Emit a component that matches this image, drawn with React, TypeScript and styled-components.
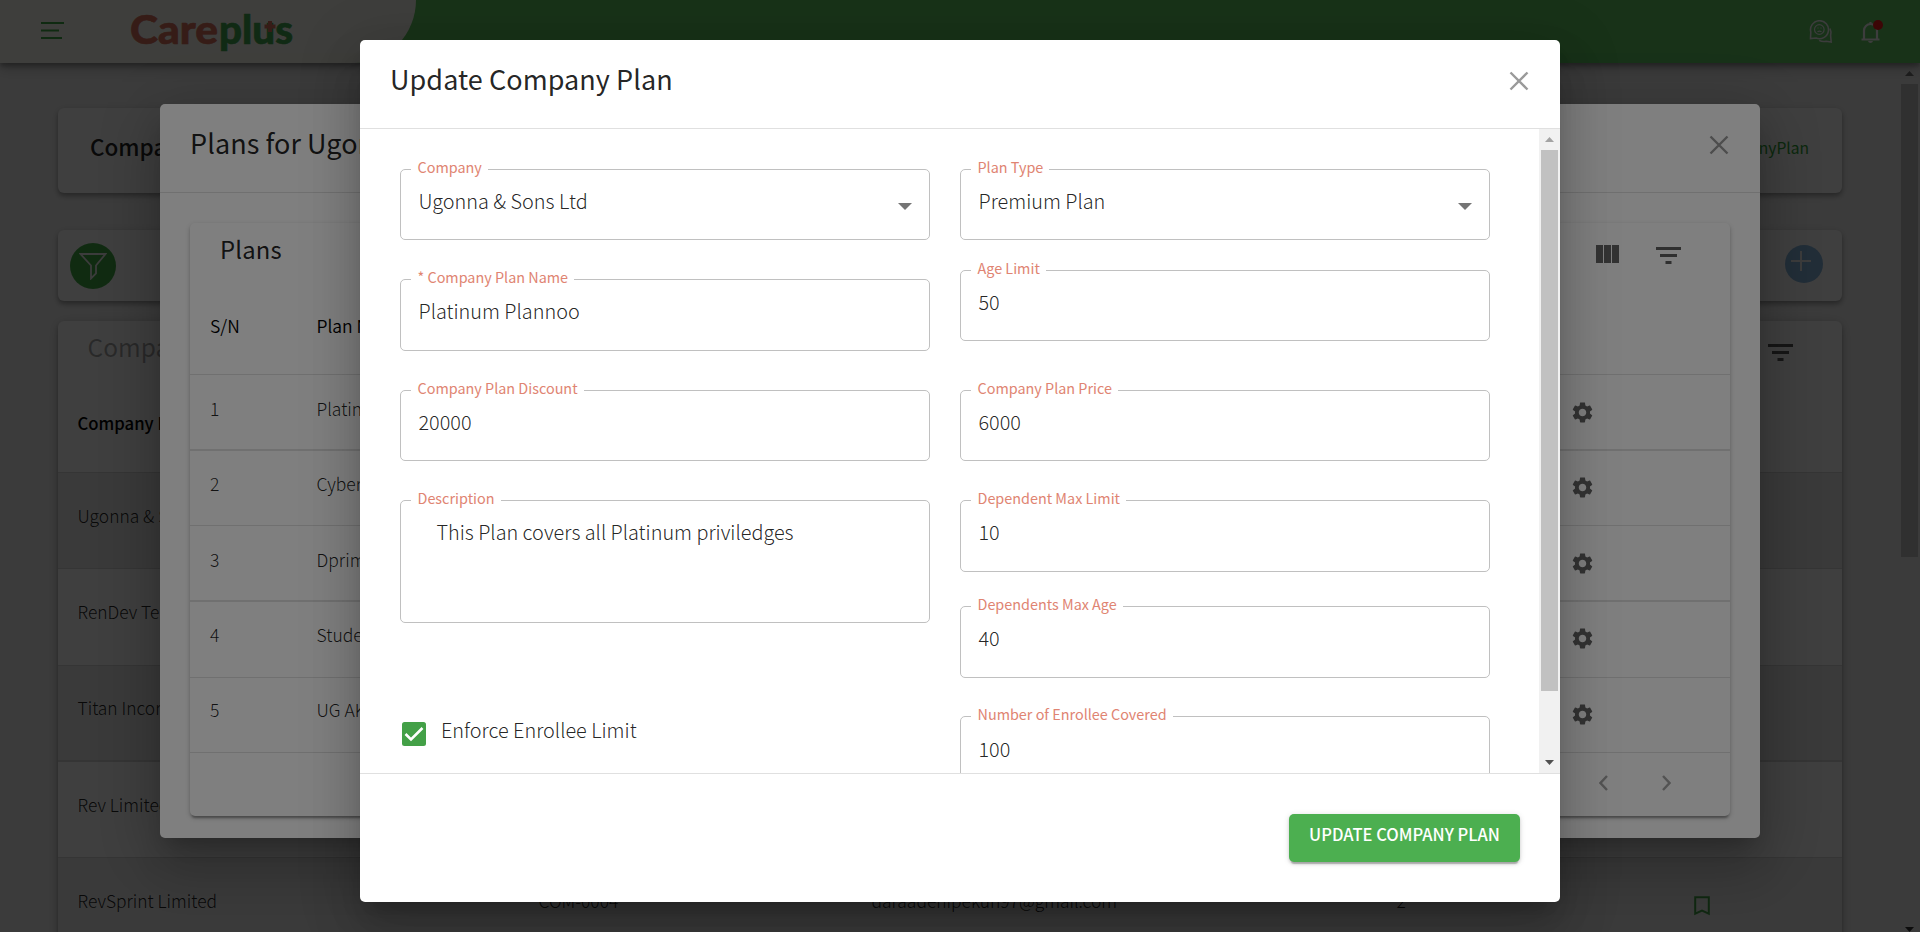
import React from "react";
import styled, { createGlobalStyle } from "styled-components";

const GlobalStyle = createGlobalStyle`
  * { box-sizing: border-box; }
  html, body { margin: 0; height: 932px; overflow: hidden; background: #eee; }
  body { font-family: "Noto Sans CJK SC", "Noto Sans", sans-serif; color: rgba(0,0,0,.87); }
  button { font: inherit; border: 0; background: none; padding: 0; }
`;

const Screen = styled.div`
  position: relative;
  width: 1920px;
  height: 932px;
  overflow: hidden;
  display: flex;
  flex-direction: column;
  background: #eee;
`;

const TopBar = styled.header`
  display: flex;
  justify-content: space-between;
  flex: none;
  height: 63px;
  z-index: 1;
  background: #60c862;
  box-shadow: 0 3px 5px rgba(0, 0, 0, .3), 0 6px 12px rgba(0, 0, 0, .2);
`;

const Brand = styled.div`
  display: flex;
  align-items: center;
  width: 416px;
  padding-left: 41px;
  gap: 66px;
  background: #fafaf0;
  border-radius: 0 0 74px 0 / 0 0 76px 0;
`;

const TopIcons = styled.div`
  display: flex;
  align-items: center;
  gap: 26px;
  padding-right: 37px;
`;

const Body = styled.div`
  display: flex;
  flex: 1;
  min-height: 0;
`;

const Content = styled.main`
  flex: 1;
  padding: 45px 57px 0 58px;
`;

const Card = styled.section<{ $h: number; $mb: number }>`
  display: flex;
  align-items: center;
  justify-content: space-between;
  height: ${(p) => p.$h}px;
  margin-bottom: ${(p) => p.$mb}px;
  background: #fcfcfc;
  border-radius: 6px;
  box-shadow: 0 3px 4px rgba(0, 0, 0, .25), 0 2px 9px rgba(0, 0, 0, .14);
`;

const CardTitle = styled.h2`
  margin: 0 0 0 32px;
  font-size: 22.5px;
  font-weight: 500;
  line-height: 30px;
  padding-bottom: 10px;
`;

const GreenLink = styled.a`
  font-size: 15.6px;
  line-height: 20px;
  color: #2fa236;
  margin-right: 33px;
  padding-bottom: 8px;
`;

const Round = styled.button<{ $size: number; $bg: string; $m: string }>`
  display: flex;
  align-items: center;
  justify-content: center;
  width: ${(p) => p.$size}px;
  height: ${(p) => p.$size}px;
  margin: ${(p) => p.$m};
  border-radius: 50%;
  background: ${(p) => p.$bg};
`;

const Listing = styled.section`
  height: 700px;
  background: #fcfcfc;
  border-radius: 6px;
  box-shadow: 0 3px 4px rgba(0, 0, 0, .25), 0 2px 12px rgba(0, 0, 0, .18);
`;

const ListingTop = styled.div`
  display: flex;
  justify-content: space-between;
  height: 74px;
  padding: 8px 49px 0 29.5px;
`;

const ListingTitle = styled.div`
  font-size: 24.5px;
  line-height: 36px;
  color: rgba(0, 0, 0, .34);
`;

const ListingRow = styled.div<{ $shade?: boolean; $head?: boolean; $thick?: boolean }>`
  display: grid;
  grid-template-columns: 461px 333px 525px 284px 1fr;
  align-items: center;
  height: ${(p) => (p.$head ? 78 : 96.25)}px;
  padding: 0 0 ${(p) => (p.$head ? 21 : 9)}px 19.5px;
  border-bottom: ${(p) => (p.$thick ? 2 : 1)}px solid #d4d4d4;
  background: ${(p) => (p.$shade ? "#e9e9e9" : "transparent")};
  font-size: ${(p) => (p.$head ? 16.7 : 17.4)}px;
  font-weight: ${(p) => (p.$head ? 500 : 300)};
  line-height: 24px;
  color: ${(p) => (p.$head ? "#000" : "rgba(0,0,0,.87)")};
`;

const Rail = styled.div<{ $dark?: boolean }>`
  display: flex;
  flex-direction: column;
  align-items: center;
  justify-content: space-between;
  flex: none;
  width: 21px;
  background: ${(p) => (p.$dark ? "transparent" : "#f1f1f1")};
`;

const RailTop = styled.div`
  display: flex;
  flex-direction: column;
  align-items: center;
`;

const RailArrow = styled.div`
  display: flex;
  align-items: center;
  justify-content: center;
  height: 21px;
`;

const Thumb = styled.div<{ $h: number }>`
  width: 17px;
  height: ${(p) => p.$h}px;
  background: #c1c1c1;
`;

const Backdrop = styled.div<{ $top: number }>`
  position: absolute;
  inset: 0;
  z-index: 2;
  display: flex;
  justify-content: center;
  align-items: flex-start;
  padding-top: ${(p) => p.$top}px;
  background: rgba(0, 0, 0, .5);
`;

const Dialog = styled.div<{ $w: number; $h: number }>`
  display: flex;
  flex-direction: column;
  width: ${(p) => p.$w}px;
  height: ${(p) => p.$h}px;
  background: #fff;
  border-radius: 5px;
  overflow: hidden;
  box-shadow: 0 14px 19px -9px rgba(0, 0, 0, .2), 0 30px 48px 4px rgba(0, 0, 0, .14),
    0 11px 58px 10px rgba(0, 0, 0, .12);
`;

const DialogHead = styled.div`
  display: flex;
  justify-content: space-between;
  flex: none;
  height: 89px;
  padding: 20px 31px 0 30px;
  border-bottom: 1px solid #e0e0e0;
`;

const DialogTitle = styled.h1`
  margin: 0;
  font-size: 27px;
  font-weight: 400;
  letter-spacing: .06px;
  line-height: 38px;
`;

const CloseIcon = () => (
  <svg width="20" height="20" viewBox="0 0 20 20" style={{ marginTop: 11 }}>
    <path d="M1.5 1.5 18.5 18.5M18.5 1.5 1.5 18.5" stroke="#9a9a9a" strokeWidth="2.4" fill="none" />
  </svg>
);

const Paper = styled.div`
  display: flex;
  flex-direction: column;
  height: 593px;
  margin: 30px 30px 0;
  border-radius: 5px;
  box-shadow: 0 4px 2px -2px rgba(0, 0, 0, .22), 0 2px 3px rgba(0, 0, 0, .16), 0 2px 6px rgba(0, 0, 0, .16);
`;

const PaperBar = styled.div`
  display: flex;
  justify-content: space-between;
  height: 76px;
  padding: 8px 49px 0 30px;
`;

const PaperTitle = styled.div`
  font-size: 23.8px;
  font-weight: 400;
  line-height: 36px;
  letter-spacing: .2px;
`;

const BarIcons = styled.div`
  display: flex;
  align-items: flex-start;
  gap: 37px;
  padding-top: 14px;
`;

const PlanRow = styled.div<{ $head?: boolean; $thick?: boolean }>`
  display: grid;
  grid-template-columns: 106.5px 1254.5px 1fr;
  align-items: center;
  height: ${(p) => (p.$head || p.$thick ? 76 : 75.25)}px;
  padding: 0 0 ${(p) => (p.$head ? 22 : p.$thick ? 7 : 9)}px 20px;
  border-bottom: ${(p) => (p.$thick ? 2 : 1)}px solid #e0e0e0;
  font-size: 17.5px;
  font-weight: ${(p) => (p.$head ? 350 : 300)};
  line-height: 24px;
  color: ${(p) => (p.$head ? "#000" : "rgba(0,0,0,.87)")};
`;

const Pager = styled.div`
  display: flex;
  flex: 1;
  align-items: center;
  justify-content: flex-end;
  gap: 54px;
  padding: 0 59px 2px 0;
`;

const FormArea = styled.div`
  display: flex;
  flex: none;
  height: 644px;
  overflow: hidden;
`;

const Columns = styled.div`
  display: grid;
  grid-template-columns: 530px 530px;
  gap: 30px;
  align-items: start;
  flex: 1;
  padding: 40px 0 0 40px;
`;

const Column = styled.div`
  display: flex;
  flex-direction: column;
`;

const Field = styled.div<{ $h?: number; $mb?: number; $indent?: boolean; $pt?: number }>`
  position: relative;
  display: flex;
  align-items: flex-start;
  justify-content: space-between;
  flex: none;
  height: ${(p) => p.$h ?? 71}px;
  margin-bottom: ${(p) => p.$mb ?? 0}px;
  padding: ${(p) => p.$pt ?? 16}px 17px 0 ${(p) => (p.$indent ? 35.5 : 17.5)}px;
  border: 1px solid #c0c0c0;
  border-radius: 5px;
  font-size: 19.85px;
  font-weight: 300;
  line-height: 30px;
`;

const Label = styled.label`
  position: absolute;
  left: 10px;
  top: -13px;
  padding: 0 6px 0 6.5px;
  background: #fff;
  color: #e08472;
  font-size: 14.4px;
  font-weight: 400;
  line-height: 20px;
  white-space: nowrap;
`;

const Caret = () => (
  <svg width="14" height="7" viewBox="0 0 14 7" style={{ marginTop: 17 }}>
    <path d="M0 0h14L7 7z" fill="#757575" />
  </svg>
);

const CheckRow = styled.div`
  display: flex;
  align-items: flex-start;
  gap: 15px;
  padding-left: 2px;
  font-size: 19.85px;
  font-weight: 300;
  line-height: 28px;
`;

const Footer = styled.div`
  display: flex;
  justify-content: flex-end;
  flex: 1;
  padding: 40px 40px 0 0;
  border-top: 1px solid #e0e0e0;
`;

const Submit = styled.button`
  width: 231px;
  height: 48px;
  padding-bottom: 8px;
  border-radius: 5px;
  background: #4caf50;
  color: #fff;
  font-size: 16.55px;
  font-weight: 500;
  box-shadow: 0 4px 1px -2px rgba(0, 0, 0, .2), 0 2px 3px rgba(0, 0, 0, .14), 0 1px 6px rgba(0, 0, 0, .12);
`;

const FilterIcon = ({ color = "#616161" }: { color?: string }) => (
  <svg width="25" height="17" viewBox="0 0 25 17" style={{ marginTop: 2 }}>
    <path d="M0 0h25v3H0zM4 7h17v3H4zM9.500 14h6v3h-6z" fill={color} />
  </svg>
);

const Gear = () => (
  <svg width="25" height="25" viewBox="0 0 24 24" style={{ marginTop: 8, marginLeft: -1 }}>
    <path
      fill="#666"
      d="M19.140 12.940c.04-.3.06-.61.06-.94 0-.32-.02-.64-.07-.94l2.030-1.580c.18-.14.23-.41.12-.61l-1.920-3.320c-.12-.22-.37-.29-.59-.22l-2.390.96c-.5-.38-1.030-.7-1.620-.94l-.36-2.540c-.04-.24-.24-.41-.48-.41h-3.840c-.24 0-.43.17-.47.41l-.36 2.540c-.59.24-1.130.57-1.620.94l-2.390-.96c-.22-.08-.47 0-.59.22L2.740 8.870c-.12.21-.08.47.12.61l2.030 1.580c-.05.3-.09.63-.09.94s.02.64.07.94l-2.030 1.580c-.18.14-.23.41-.12.61l1.920 3.320c.12.22.37.29.59.22l2.390-.96c.5.38 1.030.7 1.620.94l.36 2.540c.05.24.24.41.48.41h3.840c.24 0 .44-.17.47-.41l.36-2.540c.59-.24 1.130-.56 1.620-.94l2.390.96c.22.08.47 0 .59-.22l1.920-3.320c.12-.22.07-.47-.12-.61l-2.010-1.580zM12 15.600c-1.980 0-3.600-1.620-3.600-3.600s1.620-3.600 3.600-3.600 3.600 1.620 3.600 3.600-1.620 3.600-3.600 3.600z"
    />
  </svg>
);

const Logo = () => (
  <svg width="164" height="62" viewBox="0 -7 164 62">
    <g fontFamily="Lato" fontWeight="900" fontSize="39" strokeWidth="0.6" strokeLinejoin="round">
      <text x="0" y="36" fill="#d8705c" stroke="#d8705c" textLength="88" lengthAdjust="spacingAndGlyphs">Care</text>
      <text x="89" y="36" fill="#43a850" stroke="#43a850" textLength="74" lengthAdjust="spacingAndGlyphs">plus</text>
    </g>
    <path d="M140 13v11M134.500 18.500h11" stroke="#d8705c" strokeWidth="4" />
  </svg>
);

const Triangle = ({ down, color }: { down?: boolean; color: string }) => (
  <svg width="9" height="5" viewBox="0 0 9 5">
    <path d={down ? "M0 0h9L4.500 5z" : "M0 5h9L4.500 0z"} fill={color} />
  </svg>
);

const plans = ["Platinum Plannoo", "Cyber Plan", "Dprime Plan", "Student Plan", "UG AKS Plan"];
const companies = ["Ugonna & Sons Ltd", "RenDev Technologies", "Titan Incorporated", "Rev Limited", "RevSprint Limited"];

export default function App() {
  return (
    <Screen>
      <GlobalStyle />
      <TopBar>
        <Brand>
          <svg width="23" height="17" viewBox="0 0 23 17" style={{ marginBottom: 2 }}>
            <path d="M0 1h23M0 8.500h18M0 16h21" stroke="#3fa845" strokeWidth="2.200" />
          </svg>
          <Logo />
        </Brand>
        <TopIcons>
          <svg width="24" height="24" viewBox="0 0 24 24" fill="none" stroke="#f0f0f0" strokeWidth="1.600">
            <path d="M1.500 18.500l.3-6.500A9 9 0 1 1 7 18z" />
            <path d="M21 8.500c1.500 3 1 5 .6 7l.6 6.500-5-.8c-2.500.6-5 .3-7-.8" />
            <circle cx="10.300" cy="9.500" r="4.800" strokeWidth="1.200" />
            <path d="M8.500 8h1M11.500 8h1M8.500 11.800q2-1.500 4 0" strokeWidth="1.200" />
          </svg>
          <svg width="24" height="24" viewBox="0 0 24 24" fill="none">
            <path d="M2.500 19.500h18M5 19v-8.500a6.500 6.500 0 0 1 13 0V19M11.500 2v2" stroke="#f4f4f4" strokeWidth="2.200" />
            <path d="M9 21h5q-.5 2-2.500 2T9 21z" fill="#f4f4f4" />
            <circle cx="19" cy="5" r="5" fill="#f01818" />
          </svg>
        </TopIcons>
      </TopBar>
      <Body>
        <Content>
          <Card $h={85} $mb={37}>
            <CardTitle>Company Plan</CardTitle>
            <GreenLink>CompanyPlan</GreenLink>
          </Card>
          <Card $h={71} $mb={20}>
            <Round $size={46} $bg="#43ac47" $m="0 0 0 12px">
              <svg width="28" height="28" viewBox="0 0 28 28" fill="none" stroke="#f0f0f0" strokeWidth="1.800">
                <path d="M1.500 2h25L17 13.500v8L12 26.500v-13z" />
              </svg>
            </Round>
            <Round $size={38} $bg="#86b6de" $m="0 19px 3px 0">
              <svg width="20" height="20" viewBox="0 0 20 20" style={{ margin: "0 6px 6px 0" }}>
                <path d="M10 0v20M0 10h20" stroke="#f0f0f0" strokeWidth="2" />
              </svg>
            </Round>
          </Card>
          <Listing>
            <ListingTop>
              <ListingTitle>Company Plans</ListingTitle>
              <div style={{ paddingTop: 13 }}><FilterIcon color="#585858" /></div>
            </ListingTop>
            <ListingRow $head>
              <span>Company Name</span>
            </ListingRow>
            {companies.map((c, i) => (
              <ListingRow key={c} $shade={i % 2 === 0} $thick={i === 2}>
                <span>{c}</span>
                <span>{`COM-000${i}`}</span>
                <span>daraadenipekun97@gmail.com</span>
                <span>2</span>
                <svg width="16" height="20" viewBox="0 0 16 20" style={{ margin: "9px 0 0 13px" }}>
                  <path d="M1.200 1.200h13.600v16.500L8 14.500l-6.800 3.200z" fill="none" stroke="#43a047" strokeWidth="2" />
                </svg>
              </ListingRow>
            ))}
          </Listing>
        </Content>
        <Rail $dark>
          <RailTop>
            <RailArrow><Triangle color="#777" /></RailArrow>
            <Thumb $h={473} />
          </RailTop>
          <Triangle down color="#333" />
        </Rail>
      </Body>

      <Backdrop $top={104}>
        <Dialog $w={1600} $h={734}>
          <DialogHead>
            <DialogTitle>Plans for Ugonna &amp; Sons Ltd</DialogTitle>
            <CloseIcon />
          </DialogHead>
          <Paper>
            <PaperBar>
              <PaperTitle>Plans</PaperTitle>
              <BarIcons>
                <svg width="23" height="18" viewBox="0 0 23 18">
                  <path d="M0 0h7v18H0zM8 0h7v18H8zM16 0h7v18h-7z" fill="#666" />
                </svg>
                <FilterIcon />
              </BarIcons>
            </PaperBar>
            <PlanRow $head>
              <span>S/N</span>
              <span>Plan Name</span>
            </PlanRow>
            {plans.map((p, i) => (
              <PlanRow key={p} $thick={i === 0 || i === 2}>
                <span>{i + 1}</span>
                <span>{p}</span>
                <Gear />
              </PlanRow>
            ))}
            <Pager>
              <svg width="9" height="16" viewBox="0 0 9 16"><path d="M8 1 1.500 8 8 15" fill="none" stroke="#a6a6a6" strokeWidth="2.400" /></svg>
              <svg width="9" height="16" viewBox="0 0 9 16"><path d="M1 1 7.500 8 1 15" fill="none" stroke="#a6a6a6" strokeWidth="2.400" /></svg>
            </Pager>
          </Paper>
        </Dialog>
      </Backdrop>

      <Backdrop $top={40}>
        <Dialog $w={1200} $h={862}>
          <DialogHead>
            <DialogTitle>Update Company Plan</DialogTitle>
            <CloseIcon />
          </DialogHead>
          <FormArea>
            <Columns>
              <Column>
                <Field $mb={39}><Label>Company</Label>Ugonna &amp; Sons Ltd<Caret /></Field>
                <Field $h={72} $mb={39}><Label>* Company Plan Name</Label>Platinum Plannoo</Field>
                <Field $mb={39}><Label>Company Plan Discount</Label>20000</Field>
                <Field $h={123} $mb={93} $indent><Label>Description</Label>This Plan covers all Platinum priviledges</Field>
                <CheckRow>
                  <svg width="24" height="24" viewBox="0 0 24 24" style={{ marginTop: 6 }}>
                    <rect width="24" height="24" rx="2.500" fill="#43a047" />
                    <path d="M3.500 12l5.500 5.500L20.500 6" fill="none" stroke="#fff" strokeWidth="2.600" />
                  </svg>
                  <span>Enforce Enrollee Limit</span>
                </CheckRow>
              </Column>
              <Column>
                <Field $mb={30}><Label>Plan Type</Label>Premium Plan<Caret /></Field>
                <Field $mb={49}><Label>Age Limit</Label>50</Field>
                <Field $mb={39}><Label>Company Plan Price</Label>6000</Field>
                <Field $h={72} $mb={34}><Label>Dependent Max Limit</Label>10</Field>
                <Field $h={72} $mb={38}><Label>Dependents Max Age</Label>40</Field>
                <Field $h={72} $pt={17}><Label>Number of Enrollee Covered</Label>100</Field>
              </Column>
            </Columns>
            <Rail>
              <RailTop>
                <RailArrow><Triangle color="#a3a3a3" /></RailArrow>
                <Thumb $h={541} />
              </RailTop>
              <RailArrow><Triangle down color="#505050" /></RailArrow>
            </Rail>
          </FormArea>
          <Footer>
            <Submit>UPDATE COMPANY PLAN</Submit>
          </Footer>
        </Dialog>
      </Backdrop>
    </Screen>
  );
}
